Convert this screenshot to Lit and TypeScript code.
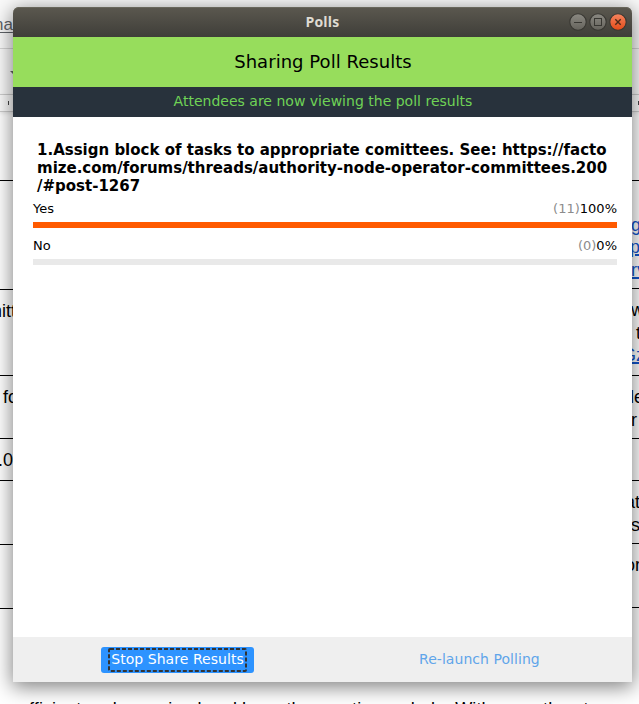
import { LitElement, html, css, svg } from "lit";
import { customElement, property } from "lit/decorators.js";

interface Line { text: string; x?: number; link?: boolean }
interface Row { height: number; lines: Line[] }

const leftRows: Row[] = [
  { height: 109, lines: [] },
  { height: 86, lines: [{ text: "mitt", x: -13 }] },
  { height: 63, lines: [{ text: "for", x: 3 }] },
  { height: 42, lines: [{ text: ".0", x: -2 }] },
  { height: 64, lines: [] },
  { height: 64, lines: [] },
  { height: 60, lines: [] },
];

const rightRows: Row[] = [
  {
    height: 108,
    lines: [
      { text: "" },
      { text: "g", link: true, x: -1 },
      { text: "p", link: true, x: -2 },
      { text: "rv", link: true, x: -1 },
    ],
  },
  { height: 87, lines: [{ text: "w", x: -1 }, { text: "t", x: 4 }, { text: "Gz", link: true, x: -10 }] },
  { height: 63, lines: [{ text: "le", x: -2 }, { text: "r", x: -1 }] },
  { height: 42, lines: [] },
  { height: 63, lines: [{ text: "at", x: -7 }, { text: "s", x: -1 }] },
  { height: 64, lines: [{ text: "or", x: -7 }] },
  { height: 60, lines: [] },
];

@customElement("doc-page")
class DocPage extends LitElement {
  static styles = css`
    :host { display: flex; flex-direction: column; height: 704px; overflow: hidden; background: #fff; color: #000;
      font: 18px/22.67px "Liberation Sans", Arial, sans-serif; white-space: nowrap; }
    .menu { height: 49px; box-sizing: border-box; padding-top: 14px; border-bottom: 1px solid #d5d5d5; color: #5f6368;
      font-size: 17px; line-height: 21px; text-decoration: underline; text-underline-offset: 2px; flex: none; }
    .menu span { margin-left: -6px; }
    .tools { height: 46px; box-sizing: border-box; border-bottom: 1px solid #d2d2d2; flex: none; padding: 22px 0 0 10px; }
    .tools svg { display: block; }
    .menu, .tools, .ruler { background: #fafafa; }
    .ruler { height: 17px; box-sizing: border-box; border-bottom: 1px solid #ccc; flex: none;
      box-shadow: 0 1px 4px rgba(0,0,0,.12); display: flex; justify-content: space-between; padding: 6px 0 0 8px; }
    .tick { width: 1px; height: 4px; background: #444; }
    .tables { display: flex; justify-content: space-between; padding-top: 68px; flex: none; height: 516px; }
    .col { overflow: hidden; }
    .left { width: 14px; }
    .right { width: 7px; }
    .row { box-sizing: border-box; border-top: 1px solid #000; padding-top: 10px; }
    .line { height: 22.67px; }
    .link { color: #1155cc; text-decoration: underline 2px; text-underline-offset: 1px; }
    .para { padding: 2px 0 0 19px; letter-spacing: .08px; }
  `;
  private column(rows: Row[], side: string) {
    return html`<div class="col ${side}">${rows.map(
      (r) => html`<div class="row" style="height:${r.height}px">${r.lines.map(
        (l) => html`<div class="line ${l.link ? "link" : ""}" style="margin-left:${l.x ?? 0}px">${l.text}</div>`
      )}</div>`
    )}</div>`;
  }
  render() {
    return html`
      <div class="menu"><span>na</span></div>
      <div class="tools"><svg width="8" height="4"><path d="M0 0H8L4 4Z" fill="#666" /></svg></div>
      <div class="ruler"><div class="tick"></div><div class="tick"></div></div>
      <div class="tables">${this.column(leftRows, "left")}${this.column(rightRows, "right")}</div>
      <div class="para">efficient and organized and have the meeting so help. With more than ten</div>
    `;
  }
}

@customElement("poll-option")
class PollOption extends LitElement {
  @property() label = "";
  @property({ type: Number }) votes = 0;
  @property({ type: Number }) percent = 0;
  static styles = css`
    :host { display: block; height: 37px; font-size: 13px; line-height: 16px; }
    .head { display: flex; justify-content: space-between; height: 21px; }
    .count { color: #8c8c8c; }
    .track { height: 6px; background: #e9e9e9; }
    .fill { height: 6px; background: #ff5a00; }
  `;
  render() {
    return html`
      <div class="head"><span>${this.label}</span><span><span class="count">(${this.votes})</span>${this.percent}%</span></div>
      <div class="track"><div class="fill" style="width:${this.percent}%"></div></div>
    `;
  }
}

@customElement("app-root")
class AppRoot extends LitElement {
  static styles = css`
    :host { display: block; position: relative; width: 639px; height: 704px; overflow: hidden; }
    .window { position: absolute; left: 13px; top: 7px; width: 619px; height: 675px; display: flex; flex-direction: column;
      background: #fff; border-radius: 6px 6px 0 0; box-shadow: 0 4px 20px 1px rgba(0,0,0,.5);
      font-family: "DejaVu Sans", sans-serif; color: #000; }
    .title { height: 30px; flex: none; display: grid; grid-template-columns: 1fr auto 1fr; align-items: center;
      border-radius: 6px 6px 0 0; background: linear-gradient(#5b584f, #3f3e39); box-shadow: inset 0 1px #68665b; }
    .name { grid-column: 2; color: #dfdbd2; font: bold 14px/20px "Open Sans", "Noto Sans", sans-serif; letter-spacing: .2px; }
    .controls { justify-self: end; display: flex; gap: 2px; padding-right: 5px; }
    .controls svg { display: block; }
    .banner { height: 50px; flex: none; background: #97dd5c; font-size: 18px; line-height: 50px; text-align: center;
      letter-spacing: .04px; padding-left: 1px; }
    .notice { height: 30px; flex: none; background: #28323c; color: #6fd356; font-size: 14px; line-height: 29px;
      text-align: center; letter-spacing: .01px; padding-left: 1px; }
    .body { flex: 1; padding: 24px 15px 0 20px; }
    .question { margin: 0 0 6px 4px; font-size: 15px; line-height: 18px; font-weight: bold; white-space: nowrap; }
    .footer { height: 45px; flex: none; background: #efefef; display: flex; align-items: center; font-size: 14px; }
    .stop { margin-left: 88px; width: 153px; height: 26px; border-radius: 3px; background: #2d93ff; color: #fff;
      display: flex; justify-content: center; align-items: center; }
    .focus { position: relative; width: 139px; height: 24px; line-height: 23px; text-align: center; white-space: nowrap;
      letter-spacing: .05px; }
    .focus svg { position: absolute; left: 0; top: 0; }
    .relaunch { margin-left: 165px; color: #5fa5ea; line-height: 23px; letter-spacing: .05px; }
  `;
  private button(close: boolean, glyph: unknown) {
    const id = close ? "c" : "g";
    return html`<svg width="18" height="18" viewBox="0 0 18 18">
      <defs><linearGradient id=${id} x2="0" y2="1">
        <stop stop-color=${close ? "#f58560" : "#8b8982"} /><stop offset="1" stop-color=${close ? "#e34a17" : "#65635c"} />
      </linearGradient></defs>
      <circle cx="9" cy="9" r="8.2" fill="url(#${id})" stroke="#383732" stroke-width="1.1" />${glyph}</svg>`;
  }
  render() {
    return html`
      <doc-page></doc-page>
      <div class="window">
        <div class="title">
          <span class="name">Polls</span>
          <div class="controls">
            ${this.button(false, svg`<path d="M5 9.5H13" stroke="#383732" />`)}
            ${this.button(false, svg`<rect x="5.5" y="5.5" width="7" height="7" fill="none" stroke="#383732" />`)}
            ${this.button(true, svg`<path d="M6.3 6.3L11.7 11.7M11.7 6.3L6.3 11.7" stroke="#4a2a18" stroke-width="1.4" />`)}
          </div>
        </div>
        <div class="banner">Sharing Poll Results</div>
        <div class="notice">Attendees are now viewing the poll results</div>
        <div class="body">
          <div class="question">1.Assign block of tasks to appropriate comittees. See: https://facto<br />mize.com/forums/threads/authority-node-operator-committees.200<br />/#post-1267</div>
          <poll-option label="Yes" .votes=${11} .percent=${100}></poll-option>
          <poll-option label="No" .votes=${0} .percent=${0}></poll-option>
        </div>
        <div class="footer">
          <div class="stop"><div class="focus"><svg width="139" height="24"><rect x="1" y="1" width="137" height="22" rx="1" fill="none" stroke="#333" stroke-width="2" stroke-dasharray="4 2" /></svg>Stop Share Results</div></div>
          <span class="relaunch">Re-launch Polling</span>
        </div>
      </div>
    `;
  }
}
